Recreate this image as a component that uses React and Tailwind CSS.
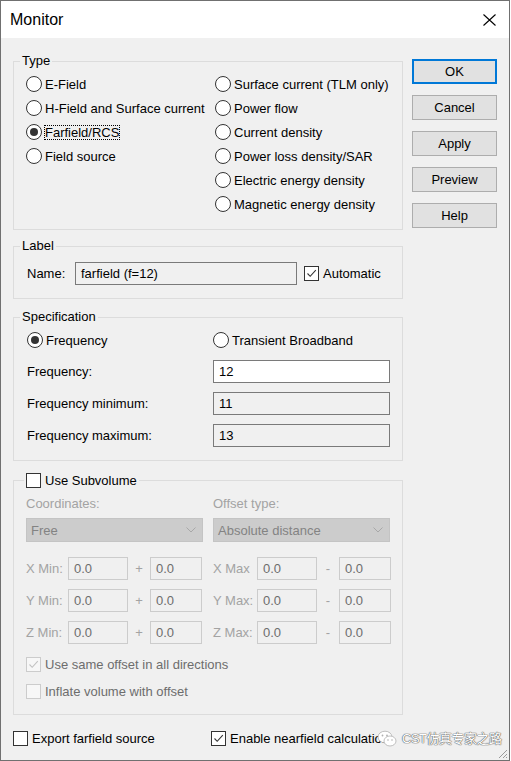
import React from "react";

const Radio = ({ checked }) => (
  <span className="w-[16px] h-[16px] rounded-full border border-[#333333] bg-white flex items-center justify-center shrink-0">
    {checked && <span className="w-[8px] h-[8px] rounded-full bg-[#333333]" />}
  </span>
);

const Check = ({ checked, disabled }) => (
  <span
    className={
      "w-[15px] h-[15px] border flex items-center justify-center shrink-0 " +
      (disabled ? "border-[#cccccc] bg-[#f7f7f7]" : "border-[#333333] bg-white")
    }
  >
    {checked && (
      <svg width="13" height="13" viewBox="0 0 13 13">
        <path
          d="M2.5 6.5 L5.2 9.3 L10.8 3.2"
          fill="none"
          stroke={disabled ? "#c2c2c2" : "#333333"}
          strokeWidth="1.1"
        />
      </svg>
    )}
  </span>
);

const RadioRow = ({ label, checked, focus }) => (
  <div className="h-[24px] flex items-center">
    <Radio checked={checked} />
    {focus ? (
      <span className="ml-[2px] border border-dotted border-black leading-[13px]">{label}</span>
    ) : (
      <span className="ml-[3px]">{label}</span>
    )}
  </div>
);

const Btn = ({ children, primary }) => (
  <div
    className={
      "w-[85px] h-[25px] bg-[#e1e1e1] flex items-center justify-center " +
      (primary ? "border-2 border-[#0078d7]" : "border border-[#adadad]")
    }
  >
    {children}
  </div>
);

const Box = ({ children, w, white, disabled }) => (
  <div
    className={
      "h-[23px] flex items-center pl-[5px] border " +
      (disabled
        ? "border-[#cccccc] bg-[#f0f0f0] text-[#6d6d6d] "
        : "border-[#7a7a7a] " + (white ? "bg-white " : "bg-[#f0f0f0] ")) +
      w
    }
  >
    {children}
  </div>
);

const Dropdown = ({ text }) => (
  <div className="w-[177px] h-[24px] bg-[#cccccc] border border-[#c4c4c4] flex items-center justify-between pl-[4px] pr-[6px] text-[#838383]">
    <span>{text}</span>
    <svg width="10" height="6" viewBox="0 0 10 6">
      <path d="M0.5 0.5 L5 5 L9.5 0.5" fill="none" stroke="#a8a8a8" strokeWidth="1" />
    </svg>
  </div>
);

const CoordRow = ({ a, b }) => (
  <div className="flex items-center h-[23px]">
    <span className="w-[42px] text-[#a3a3a3]">{a}</span>
    <Box w="w-[60px]" disabled>0.0</Box>
    <span className="w-[22px] text-center text-[#a3a3a3]">+</span>
    <Box w="w-[52px]" disabled>0.0</Box>
    <span className="w-[44px] ml-[11px] text-[#a3a3a3]">{b}</span>
    <Box w="w-[60px]" disabled>0.0</Box>
    <span className="w-[22px] text-center text-[#a3a3a3]">-</span>
    <Box w="w-[52px]" disabled>0.0</Box>
  </div>
);

export default function App() {
  return (
    <div className="w-[510px] h-[761px] bg-[#f0f0f0] border border-[#707070] flex flex-col relative font-['Liberation_Sans','Noto_Sans_CJK_SC',Arial,sans-serif] text-[13px] leading-[15px] text-black overflow-hidden">
      {/* Title bar */}
      <div className="h-[37px] bg-white flex items-center justify-between pl-[9px] pr-[13px] shrink-0">
        <span className="text-[16px] leading-[18px] mt-[1px]">Monitor</span>
        <svg width="13" height="12" viewBox="0 0 13 12" className="mt-[1px]">
          <path d="M0.5 0.5 L12.5 11.5 M12.5 0.5 L0.5 11.5" stroke="#000" strokeWidth="1.1" fill="none" />
        </svg>
      </div>

      {/* Body */}
      <div className="flex pl-[12px] pt-[15px]">
        <div className="w-[390px] flex flex-col">
          {/* Type */}
          <fieldset className="border border-[#dcdcdc] pl-[6px] pb-[13px]">
            <legend className="px-[2px] leading-[16px]">Type</legend>
            <div className="pl-[6px] pt-[3px] grid grid-cols-[189px_1fr]">
              <div className="flex flex-col">
                <RadioRow label="E-Field" />
                <RadioRow label="H-Field and Surface current" />
                <RadioRow label="Farfield/RCS" checked focus />
                <RadioRow label="Field source" />
              </div>
              <div className="flex flex-col">
                <RadioRow label="Surface current (TLM only)" />
                <RadioRow label="Power flow" />
                <RadioRow label="Current density" />
                <RadioRow label="Power loss density/SAR" />
                <RadioRow label="Electric energy density" />
                <RadioRow label="Magnetic energy density" />
              </div>
            </div>
          </fieldset>

          {/* Label */}
          <fieldset className="mt-[8px] border border-[#dcdcdc] pl-[6px] pb-[13px]">
            <legend className="px-[2px] leading-[16px]">Label</legend>
            <div className="pt-[8px] pl-[7px] flex items-center">
              <span className="w-[48px]">Name:</span>
              <Box w="w-[222px]">farfield (f=12)</Box>
              <span className="ml-[7px]">
                <Check checked />
              </span>
              <span className="ml-[4px]">Automatic</span>
            </div>
          </fieldset>

          {/* Specification */}
          <fieldset className="mt-[10px] border border-[#dcdcdc] pl-[6px] pb-[13px]">
            <legend className="px-[2px] leading-[16px]">Specification</legend>
            <div className="pt-[3px] pl-[7px] flex flex-col">
              <div className="grid grid-cols-[186px_1fr]">
                <RadioRow label="Frequency" checked />
                <RadioRow label="Transient Broadband" />
              </div>
              <div className="mt-[8px] flex flex-col gap-[9px]">
                <div className="grid grid-cols-[186px_1fr] items-center">
                  <span>Frequency:</span>
                  <Box w="w-[177px]" white>12</Box>
                </div>
                <div className="grid grid-cols-[186px_1fr] items-center">
                  <span>Frequency minimum:</span>
                  <Box w="w-[177px]">11</Box>
                </div>
                <div className="grid grid-cols-[186px_1fr] items-center">
                  <span>Frequency maximum:</span>
                  <Box w="w-[177px]">13</Box>
                </div>
              </div>
            </div>
          </fieldset>

          {/* Subvolume */}
          <fieldset className="mt-[11px] border border-[#dcdcdc] pl-[6px] pb-[11px]">
            <legend className="ml-[4px] px-[2px] leading-[16px]">
              <div className="flex items-center h-[17px]">
                <Check />
                <span className="ml-[4px]">Use Subvolume</span>
              </div>
            </legend>
            <div className="pl-[6px] pt-[6px] flex flex-col">
              <div className="grid grid-cols-[187px_1fr] h-[16px] items-center text-[#a3a3a3]">
                <span>Coordinates:</span>
                <span>Offset type:</span>
              </div>
              <div className="mt-[7px] grid grid-cols-[187px_1fr]">
                <Dropdown text="Free" />
                <Dropdown text="Absolute distance" />
              </div>
              <div className="mt-[15px] flex flex-col gap-[9px]">
                <CoordRow a="X Min:" b="X Max" />
                <CoordRow a="Y Min:" b="Y Max:" />
                <CoordRow a="Z Min:" b="Z Max:" />
              </div>
              <div className="mt-[8px] h-[24px] flex items-center text-[#6d6d6d]">
                <Check checked disabled />
                <span className="ml-[4px]">Use same offset in all directions</span>
              </div>
              <div className="mt-[3px] h-[24px] flex items-center text-[#6d6d6d]">
                <Check disabled />
                <span className="ml-[4px]">Inflate volume with offset</span>
              </div>
            </div>
          </fieldset>
        </div>

        {/* Buttons */}
        <div className="ml-[9px] mt-[6px] flex flex-col gap-[11px]">
          <Btn primary>OK</Btn>
          <Btn>Cancel</Btn>
          <Btn>Apply</Btn>
          <Btn>Preview</Btn>
          <Btn>Help</Btn>
        </div>
      </div>

      {/* Bottom row */}
      <div className="mt-[11px] pl-[12px] h-[24px] grid grid-cols-[198px_1fr] items-center">
        <div className="flex items-center">
          <Check />
          <span className="ml-[4px]">Export farfield source</span>
        </div>
        <div className="flex items-center">
          <Check checked />
          <span className="ml-[4px] whitespace-nowrap">Enable nearfield calculation</span>
        </div>
      </div>

      {/* Watermark */}
      <div className="absolute left-[376px] top-[729px] flex items-center whitespace-nowrap">
        <svg width="20" height="18" viewBox="0 0 20 18" className="shrink-0">
          <ellipse cx="8" cy="7" rx="7" ry="5.8" fill="#ffffff" stroke="#b0b0b0" strokeWidth="0.8" />
          <ellipse cx="13" cy="11" rx="6" ry="5" fill="#ffffff" stroke="#b0b0b0" strokeWidth="0.8" />
          <circle cx="5.5" cy="5.5" r="0.9" fill="#b0b0b0" />
          <circle cx="10" cy="5.5" r="0.9" fill="#b0b0b0" />
          <circle cx="11" cy="10" r="0.8" fill="#b0b0b0" />
          <circle cx="15" cy="10" r="0.8" fill="#b0b0b0" />
        </svg>
        <span className="ml-[5px] text-[13px] leading-[18px] tracking-[-0.5px] text-white whitespace-nowrap [text-shadow:0_0_1px_#555,0_0_1px_#555,0_0_1px_#777]">
          CST仿真专家之路
        </span>
      </div>

      {/* Resize grip */}
      <svg className="absolute right-[1px] bottom-[1px]" width="12" height="12" viewBox="0 0 12 12">
        <path d="M11 3 L3 11 M11 7 L7 11 M11 10 L10 11" stroke="#9a9a9a" strokeWidth="1" />
      </svg>
    </div>
  );
}
